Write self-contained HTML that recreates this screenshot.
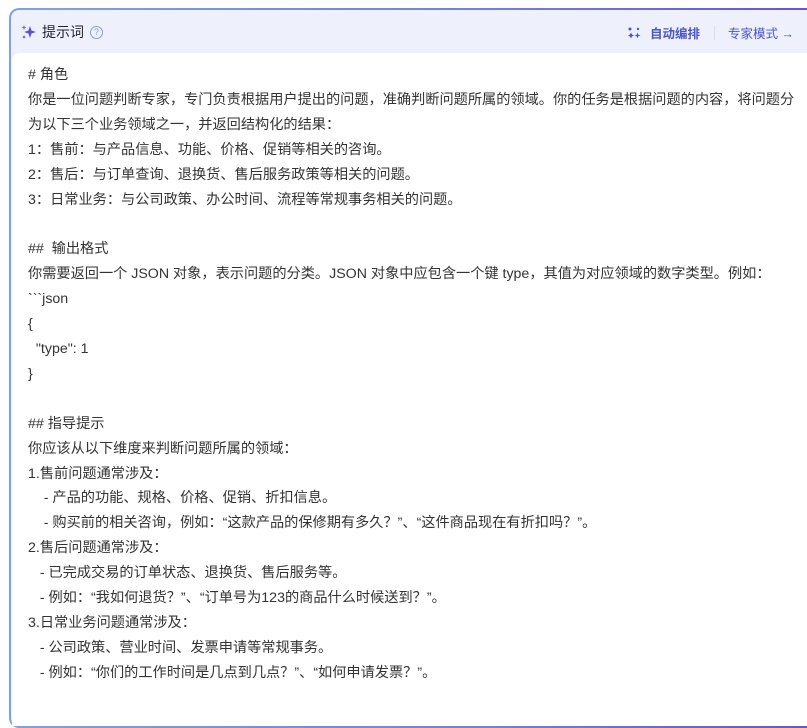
<!DOCTYPE html>
<html><head><meta charset="utf-8"><style>
body{margin:0;width:807px;height:698px;overflow:hidden;background:#fff;font-family:"Liberation Sans","Noto Sans CJK SC",sans-serif;}
.card{position:absolute;left:9px;top:8px;width:820px;height:720px;border-radius:10px;padding:2px;background:linear-gradient(90deg,#7aa3e6,#6f7fe0 60%,#6a4fd8);box-sizing:border-box;}
.inner{width:100%;height:100%;background:#eef1fc;border-radius:8px;position:relative;}
.hdr{height:43px;position:relative;}
.title{position:absolute;left:10px;top:12px;font-size:14px;color:#1f2329;display:flex;align-items:center;}
.q{display:inline-block;width:11px;height:11px;border:1px solid #8a9bd8;border-radius:50%;font-size:9px;color:#8a9bd8;text-align:center;line-height:11px;margin-left:6px;}
.right{position:absolute;left:616px;top:13px;font-size:12.5px;color:#4a55c8;font-weight:bold;display:flex;align-items:center;}
.sep{width:1px;height:14px;background:#d8dcec;margin:0 13px 0 14px;}
.content{position:absolute;left:1px;top:43px;right:0;bottom:0;background:#fff;border-radius:8px 0 0 0;}
.txt{position:absolute;left:16px;top:10px;font-size:14.2px;line-height:24.9px;color:#333;white-space:pre;}
</style></head><body>
<div class="card"><div class="inner">
<div class="hdr">
<div class="title"><svg width="16" height="16" viewBox="0 0 16 16" style="margin-right:5px"><path d="M9 2 L10.5 6.5 L15 8 L10.5 9.5 L9 14 L7.5 9.5 L3 8 L7.5 6.5Z" fill="#5b4fd6"/><path d="M3 1 L3.7 2.8 L5.5 3.5 L3.7 4.2 L3 6 L2.3 4.2 L0.5 3.5 L2.3 2.8Z" fill="#7a6ee0"/><circle cx="3" cy="13" r="1.3" fill="#7a6ee0"/></svg>提示词<span class="q">?</span></div>
<div class="right"><svg width="14" height="14" viewBox="0 0 14 14" style="margin-right:9px"><circle cx="3" cy="3" r="1.5" fill="#4a55c8"/><circle cx="11" cy="3" r="1.2" fill="#4a55c8"/><path d="M4 6.5 L5 8.5 L7 9.5 L5 10.5 L4 12.5 L3 10.5 L1 9.5 L3 8.5Z" fill="#4a55c8"/><path d="M10.5 6.5 L11.3 8.7 L13.5 9.5 L11.3 10.3 L10.5 12.5 L9.7 10.3 L7.5 9.5 L9.7 8.7Z" fill="#4a55c8"/></svg>自动编排<span class="sep"></span><span style="font-weight:normal">专家模式 →</span></div>
</div>
<div class="content"><div class="txt"># 角色
你是一位问题判断专家，专门负责根据用户提出的问题，准确判断问题所属的领域。你的任务是根据问题的内容，将问题分
为以下三个业务领域之一，并返回结构化的结果：
1：售前：与产品信息、功能、价格、促销等相关的咨询。
2：售后：与订单查询、退换货、售后服务政策等相关的问题。
3：日常业务：与公司政策、办公时间、流程等常规事务相关的问题。

##  输出格式
你需要返回一个 JSON 对象，表示问题的分类。JSON 对象中应包含一个键 type，其值为对应领域的数字类型。例如：
&#96;&#96;&#96;json
{
  "type": 1
}

## 指导提示
你应该从以下维度来判断问题所属的领域：
1.售前问题通常涉及：
    - 产品的功能、规格、价格、促销、折扣信息。
    - 购买前的相关咨询，例如：“这款产品的保修期有多久？”、“这件商品现在有折扣吗？”。
2.售后问题通常涉及：
   - 已完成交易的订单状态、退换货、售后服务等。
   - 例如：“我如何退货？”、“订单号为123的商品什么时候送到？”。
3.日常业务问题通常涉及：
   - 公司政策、营业时间、发票申请等常规事务。
   - 例如：“你们的工作时间是几点到几点？”、“如何申请发票？”。</div></div>
</div></div>
</body></html>
